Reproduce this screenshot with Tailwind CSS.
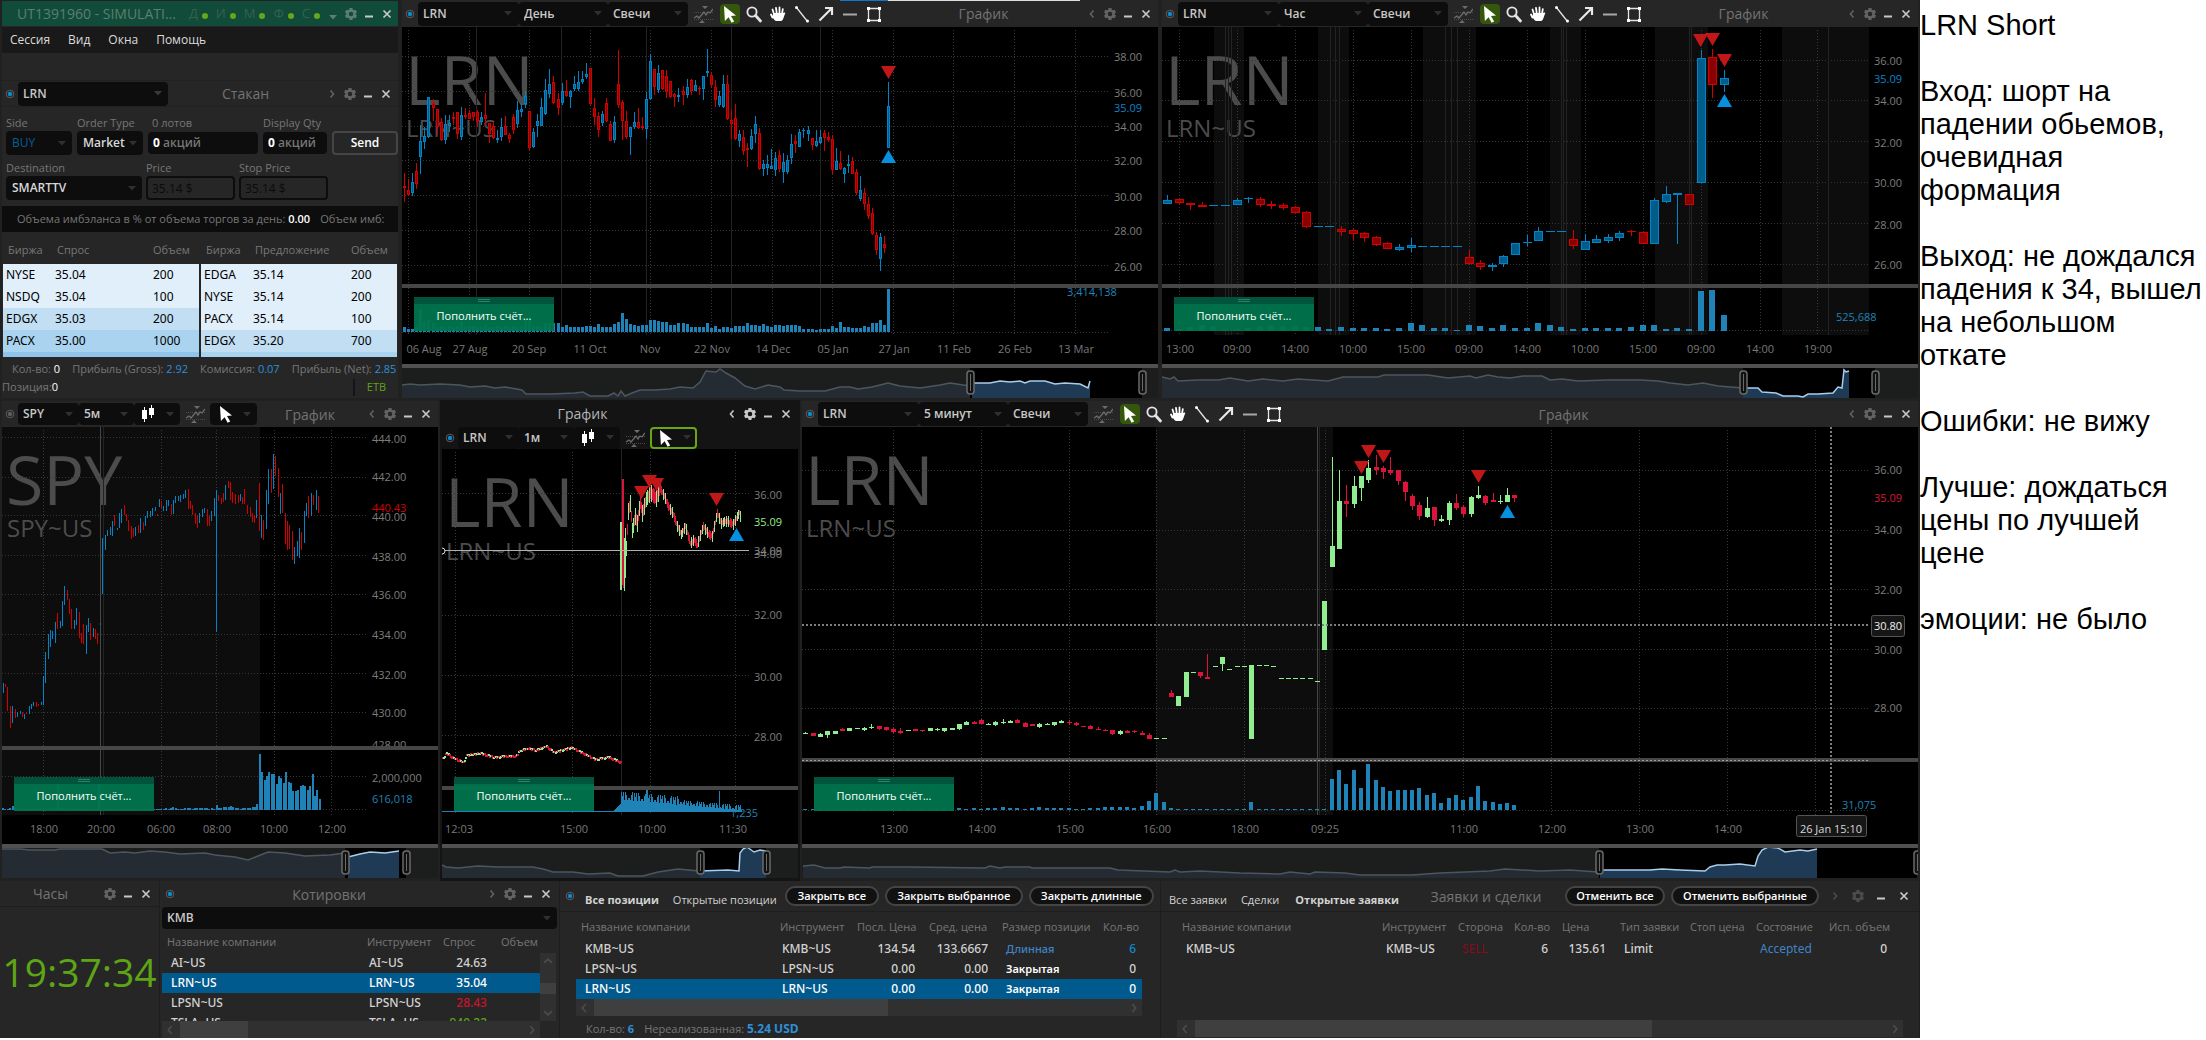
<!DOCTYPE html>
<html lang="ru">
<head>
    <meta charset="UTF-8">
    <meta name="viewport" content="width=device-width, initial-scale=1.0">
    <title>UT1391960 - SIMULATION</title>
    <script src="https://cdn.jsdelivr.net/npm/@tailwindcss/browser@4"></script>
</head>
<body class="bg-white font-['Open_Sans','Noto_Sans',sans-serif] text-[11px] text-[#767676]">
    <!-- Icons -->
    <svg class="hidden">
        <symbol id="i-gear" viewBox="0 0 14 14">
            <path fill-rule="evenodd" fill="currentColor" d="M5.6 1h2.8l.4 1.7 1.1.6 1.7-.5 1.4 2.4L11.7 6.400v1.200l1.300 1.200-1.400 2.400-1.700-.5-1.100.6L8.400 13H5.600l-.4-1.700-1.100-.6-1.700.5L1 8.800l1.300-1.200V6.400L1 5.200l1.400-2.400 1.700.5 1.100-.6zM7 4.700a2.300 2.300 0 1 0 0 4.600 2.300 2.300 0 0 0 0-4.600z"/>
        </symbol>
        <symbol id="i-min" viewBox="0 0 14 14"><path d="M3 9.500h8" stroke="#c8c8c8" stroke-width="2"/></symbol>
        <symbol id="i-close" viewBox="0 0 14 14"><path d="M3.500 3.500l7 7M10.500 3.500l-7 7" stroke="#c8c8c8" stroke-width="1.700"/></symbol>
        <symbol id="i-left" viewBox="0 0 14 14"><path d="M8.500 3.500L5.500 7l3 3.500" fill="none" stroke="currentColor" stroke-width="1.600"/></symbol>
        <symbol id="i-right" viewBox="0 0 14 14"><path d="M5.500 3.500l3 3.500-3 3.500" fill="none" stroke="currentColor" stroke-width="1.600"/></symbol>
        <symbol id="i-ring" viewBox="0 0 10 10">
            <circle cx="5" cy="5" r="3.800" fill="none" stroke="#5c5c5c"/><circle cx="5" cy="5" r="2.200" fill="currentColor"/>
        </symbol>
        <symbol id="i-caret" viewBox="0 0 8 5"><path d="M0 0h8L4 4.500z" fill="currentColor"/></symbol>
        <symbol id="i-indicator" viewBox="0 0 20 20">
            <path d="M1 8.500h19M1 15.500h19" stroke="#4a4a4a" stroke-dasharray="1 1"/>
            <path d="M1 14l3-2 2 2 5-6 2 3 2-3 2 1 3-4" fill="none" stroke="#6c6c6c" stroke-width="1.300"/>
            <path d="M9 2h6l-3 3zM6 19h6l-3-3z" fill="#6c6c6c"/>
        </symbol>
        <symbol id="i-cursor" viewBox="0 0 20 20"><path d="M4 2l12 9.500-5 .6 3.200 5.400-2.600 1.300-3-5.600L4.900 17z" fill="#fff"/></symbol>
        <symbol id="i-zoom" viewBox="0 0 20 20">
            <circle cx="8" cy="8" r="4.600" fill="none" stroke="#e4e4e4" stroke-width="1.900"/><path d="M11.500 11.500l5 5.500" stroke="#e4e4e4" stroke-width="2.800" stroke-linecap="round"/>
        </symbol>
        <symbol id="i-hand" viewBox="0 0 20 20">
            <path d="M6 10L4.500 5.500M8.700 9L8 3.800M11.500 9V3.300M14 10l.8-4.800M4.500 13.500L3 10.500" stroke="#fff" stroke-width="1.800" stroke-linecap="round"/>
            <path d="M5.500 9h9.300l1.800-.5c1 0 .8 1 .3 1.600l-1.500 4.200c-.5 1.500-1.400 2.700-2.400 2.700H8.500c-1.500 0-3-2-4.300-4.500z" fill="#fff"/>
        </symbol>
        <symbol id="i-line" viewBox="0 0 20 20">
            <path d="M4.500 3.500l11 14" stroke="#e4e4e4" stroke-width="1.300"/><circle cx="4.500" cy="3.500" r="1.500" fill="#fff"/><circle cx="15.500" cy="17" r="1.500" fill="#fff"/>
        </symbol>
        <symbol id="i-arrow" viewBox="0 0 20 20"><path d="M3.500 16.500L15 5M9 4h7v7" fill="none" stroke="#e8e8e8" stroke-width="2.200"/></symbol>
        <symbol id="i-hline" viewBox="0 0 20 20"><path d="M3 10.500h14" stroke="#a8a8a8" stroke-width="2"/></symbol>
        <symbol id="i-rect" viewBox="0 0 20 20">
            <path d="M4.500 4.500h11v12h-11z" fill="none" stroke="#e4e4e4" stroke-width="1.300"/><path d="M3 3h3v3H3zM14 3h3v3h-3zM3 15h3v3H3zM14 15h3v3h-3z" fill="#fff"/>
        </symbol>
        <symbol id="i-candles" viewBox="0 0 16 18"><path d="M4.500 2v15M11.500 0v13" stroke="#fff"/><path d="M2 5h5v9H2zM9 3h5v7H9z" fill="#fff"/></symbol>
    </svg>

    <!-- Parts shared by several windows -->
    <template id="window-buttons">
        <button aria-label="Настройки" class="grid place-items-center flex-1"><svg class="size-3.5"><use href="#i-gear"/></svg></button>
        <button aria-label="Свернуть" class="grid place-items-center flex-1"><svg class="size-3.5"><use href="#i-min"/></svg></button>
        <button aria-label="Закрыть" class="grid place-items-center flex-1"><svg class="size-3.5"><use href="#i-close"/></svg></button>
    </template>

    <template id="wide-tools">
        <svg class="size-2.5 ml-[3px] mr-[3px] text-[#0a8ad0]"><use href="#i-ring"/></svg>
        <div class="flex font-semibold text-[12px] text-[#c8c8c8]">
            <label class="relative flex items-center w-[101px]"><select aria-label="Инструмент" class="appearance-none w-full h-6 pl-[5px] rounded-sm bg-[#0d0d0d]"><option data-slot="symbol"></option></select><svg class="absolute right-[7px] w-2 h-[5px] text-[#303030]"><use href="#i-caret"/></svg></label>
            <label class="relative flex items-center w-[89px]"><select aria-label="Период" class="appearance-none w-full h-6 pl-[5px] rounded-sm bg-[#0d0d0d]"><option data-slot="period"></option></select><svg class="absolute right-1.5 w-2 h-[5px] text-[#303030]"><use href="#i-caret"/></svg></label>
            <label class="relative flex items-center w-20"><select aria-label="Вид" class="appearance-none w-full h-6 pl-[5px] rounded-sm bg-[#0d0d0d]"><option>Свечи</option></select><svg class="absolute right-1.5 w-2 h-[5px] text-[#303030]"><use href="#i-caret"/></svg></label>
        </div>
        <button aria-label="Индикаторы" class="ml-[5px] mr-[7px]"><svg class="size-5"><use href="#i-indicator"/></svg></button>
        <div class="flex gap-1">
            <button aria-label="Курсор" class="rounded-sm bg-[#35570b]"><svg class="size-5"><use href="#i-cursor"/></svg></button>
            <button aria-label="Масштаб"><svg class="size-5"><use href="#i-zoom"/></svg></button>
            <button aria-label="Сдвиг"><svg class="size-5"><use href="#i-hand"/></svg></button>
            <button aria-label="Линия"><svg class="size-5"><use href="#i-line"/></svg></button>
            <button aria-label="Стрелка"><svg class="size-5"><use href="#i-arrow"/></svg></button>
            <button aria-label="Уровень"><svg class="size-5"><use href="#i-hline"/></svg></button>
            <button aria-label="Область"><svg class="size-5"><use href="#i-rect"/></svg></button>
        </div>
    </template>

    <template id="narrow-tools">
        <div class="flex font-semibold text-[12px] text-[#c8c8c8]">
            <label class="relative flex items-center w-[61px]"><select aria-label="Инструмент" class="appearance-none w-full h-[22px] pl-[5px] rounded-sm bg-[#0d0d0d]"><option data-slot="symbol"></option></select><svg class="absolute right-1.5 w-2 h-[5px] text-[#303030]"><use href="#i-caret"/></svg></label>
            <label class="relative flex items-center w-[55px]"><select aria-label="Период" class="appearance-none w-full h-[22px] pl-[5px] rounded-sm bg-[#0d0d0d]"><option data-slot="period"></option></select><svg class="absolute right-1.5 w-2 h-[5px] text-[#303030]"><use href="#i-caret"/></svg></label>
        </div>
        <button aria-label="Вид" class="flex items-center justify-between w-[46px] h-[22px] px-1.5 rounded-sm bg-[#0d0d0d]"><svg class="w-4 h-[18px]"><use href="#i-candles"/></svg><svg class="w-2 h-[5px] text-[#303030]"><use href="#i-caret"/></svg></button>
        <button aria-label="Индикаторы" class="mx-[5px]"><svg class="size-5"><use href="#i-indicator"/></svg></button>
    </template>

    <template id="deposit">
        <button class="absolute left-3 bottom-[67px] w-[140px] h-[34px] pb-0.5 border-t-[7px] border-[#00543b] bg-[#00754d]/95 text-white"><i class="absolute -top-[5px] left-1/2 w-3 h-[3px] -ml-1.5 border-y border-[#2f8068]"></i>Пополнить счёт...</button>
    </template>

    <div class="grid grid-cols-[1920fr_286fr] h-screen min-h-[900px]">
        <!-- Terminal -->
        <main class="grid grid-rows-[400fr_481fr_157fr] min-w-0 pb-0.5 overflow-hidden">
            <div class="grid grid-cols-[400fr_760fr_760fr] min-h-0">
                <!-- Main window and order entry -->
                <section class="flex flex-col min-w-0 bg-[#262626] border-2 border-t-1 border-[#212121] overflow-hidden">
                    <header class="flex items-center h-[25px] shrink-0 -mx-px pl-4 bg-[#104c39] text-[#5f7d72]">
                        <h1 class="flex-1 min-w-0 whitespace-nowrap text-[14px]">UT1391960 - SIMULATI...</h1>
                        <ul class="flex gap-2 text-[13px] text-[#37604f]">
                            <li class="flex items-center gap-1">Д<i class="size-1.5 mt-1 rounded-full bg-[#69a615]"></i></li>
                            <li class="flex items-center gap-1">И<i class="size-1.5 mt-1 rounded-full bg-[#69a615]"></i></li>
                            <li class="flex items-center gap-1">М<i class="size-1.5 mt-1 rounded-full bg-[#69a615]"></i></li>
                            <li class="flex items-center gap-1">Ф<i class="size-1.5 mt-1 rounded-full bg-[#69a615]"></i></li>
                            <li class="flex items-center gap-1">С<i class="size-1.5 mt-1 rounded-full bg-[#69a615]"></i></li>
                        </ul>
                        <div data-use="window-buttons" class="flex w-[72px] ml-1 mr-[3px]">
                            <button aria-label="Ещё" class="grid place-items-center flex-1"><svg class="w-2 h-[5px] mt-2"><use href="#i-caret"/></svg></button>
                        </div>
                    </header>
                    <nav class="flex items-center gap-[18px] h-[26px] shrink-0 mt-px px-2 bg-[#191919] text-[12px] text-[#dcdcdc]">
                        <a href="#">Сессия</a><a href="#">Вид</a><a href="#">Окна</a><a href="#">Помощь</a>
                    </nav>
                    <div class="h-[27px] shrink-0"></div>

                    <header class="flex items-center h-[27px] shrink-0 border-y border-[#212121]">
                        <svg class="size-2.5 ml-[3px] mr-[3px] text-[#0a8ad0]"><use href="#i-ring"/></svg>
                        <label class="relative flex items-center w-[150px]">
                            <select aria-label="Инструмент" class="appearance-none w-full h-6 pl-[5px] rounded-sm bg-[#0d0d0d] font-semibold text-[12px] text-[#c8c8c8]"><option>LRN</option></select>
                            <svg class="absolute right-1.5 w-2 h-[5px] text-[#3a3a3a]"><use href="#i-caret"/></svg>
                        </label>
                        <h2 class="flex-1 text-center text-[14px] text-[#737373]">Стакан</h2>
                        <div data-use="window-buttons" class="flex w-[72px] mr-[3px] text-[#636363]">
                            <button aria-label="Далее" class="grid place-items-center flex-1"><svg class="size-3.5"><use href="#i-right"/></svg></button>
                        </div>
                    </header>

                    <form class="shrink-0 pl-1 pt-2 text-[12px] font-semibold">
                        <div class="grid grid-cols-[66px_66px_110px_64px_66px] gap-x-[4px] justify-between">
                            <label class="font-normal text-[11px] leading-4" for="side">Side</label>
                            <label class="font-normal text-[11px] leading-4 whitespace-nowrap" for="type">Order Type</label>
                            <label class="font-normal text-[11px] leading-4 pl-1" for="lots">0 лотов</label>
                            <label class="font-normal text-[11px] leading-4 whitespace-nowrap" for="qty">Display Qty</label>
                            <span></span>
                            <div class="relative flex items-center">
                                <select id="side" class="appearance-none w-full h-6 pl-1.5 rounded-sm bg-[#0d0d0d] font-normal text-[#075d94]"><option>BUY</option></select>
                                <svg class="absolute right-1.5 w-2 h-[5px] text-[#303030]"><use href="#i-caret"/></svg>
                            </div>
                            <div class="relative flex items-center">
                                <select id="type" class="appearance-none w-full h-6 pl-1.5 rounded-sm bg-[#0d0d0d] text-[#d8d8d8]"><option>Market</option></select>
                                <svg class="absolute right-1.5 w-2 h-[5px] text-[#303030]"><use href="#i-caret"/></svg>
                            </div>
                            <div class="flex items-center h-[22px] my-px px-[5px] gap-[3px] rounded-sm bg-[#0d0d0d]"><input id="lots" value="0" class="w-[7px] font-bold text-white">акций</div>
                            <div class="flex items-center h-[22px] my-px px-[5px] gap-[3px] rounded-sm bg-[#0d0d0d]"><input id="qty" value="0" class="w-[7px] font-bold text-white">акций</div>
                            <button type="button" class="h-6 rounded border-2 border-[#454545] text-white">Send</button>
                        </div>
                        <div class="grid grid-cols-[136px_89px_89px] gap-x-1 mt-[5px]">
                            <label class="font-normal text-[11px] leading-4" for="dest">Destination</label>
                            <label class="font-normal text-[11px] leading-4" for="price">Price</label>
                            <label class="font-normal text-[11px] leading-4" for="stop">Stop Price</label>
                            <div class="relative flex items-center">
                                <select id="dest" class="appearance-none w-full h-6 pl-1.5 rounded-sm bg-[#0d0d0d] text-[#d8d8d8]"><option>SMARTTV</option></select>
                                <svg class="absolute right-1.5 w-2 h-[5px] text-[#303030]"><use href="#i-caret"/></svg>
                            </div>
                            <input id="price" value="35.14 $" class="min-w-0 h-6 px-1 rounded border-2 border-[#0d0d0d] font-normal text-[#0b0b0b]">
                            <input id="stop" value="35.14 $" class="min-w-0 h-6 px-1 rounded border-2 border-[#0d0d0d] font-normal text-[#0b0b0b]">
                        </div>
                    </form>

                    <p class="flex items-center gap-2.5 h-[26px] shrink-0 mt-1.5 pl-[15px] bg-[#0d0d0d] whitespace-nowrap overflow-hidden">
                        <span>Объема имбэланса в % от объема торгов за день: <b class="font-semibold text-white">0.00</b></span><span>Объем имб:</span>
                    </p>

                    <!-- Order book -->
                    <div class="grid grid-cols-2 gap-0.5 h-[125px] shrink-0 px-px overflow-hidden">
                        <table class="table-fixed self-start w-full text-left">
                            <thead><tr class="h-8"><th class="w-[49px] pl-[5px] pt-1 font-normal">Биржа</th><th class="pl-[5px] pt-1 font-normal">Спрос</th><th class="w-[46px] pt-1 font-normal">Объем</th></tr></thead>
                            <tbody class="font-['Noto_Sans',sans-serif] text-[12px] text-black">
                                <tr class="h-[22px] bg-[#e1effa]"><td class="pl-[3px]">NYSE</td><td class="pl-[3px]">35.04</td><td>200</td></tr>
                                <tr class="h-[22px] bg-[#e1effa]"><td class="pl-[3px]">NSDQ</td><td class="pl-[3px]">35.04</td><td>100</td></tr>
                                <tr class="h-[22px] bg-[#c1def3]"><td class="pl-[3px]">EDGX</td><td class="pl-[3px]">35.03</td><td>200</td></tr>
                                <tr class="h-[22px] bg-[#aad3f0]"><td class="pl-[3px]">PACX</td><td class="pl-[3px]">35.00</td><td>1000</td></tr>
                                <tr class="h-[22px] bg-[#90c4ea]"><td></td><td></td><td></td></tr>
                            </tbody>
                        </table>
                        <table class="table-fixed self-start w-full text-left">
                            <thead><tr class="h-8"><th class="w-[49px] pl-[5px] pt-1 font-normal">Биржа</th><th class="pl-[5px] pt-1 font-normal">Предложение</th><th class="w-[46px] pt-1 font-normal">Объем</th></tr></thead>
                            <tbody class="font-['Noto_Sans',sans-serif] text-[12px] text-black">
                                <tr class="h-[22px] bg-[#e1effa]"><td class="pl-[3px]">EDGA</td><td class="pl-[3px]">35.14</td><td>200</td></tr>
                                <tr class="h-[22px] bg-[#e1effa]"><td class="pl-[3px]">NYSE</td><td class="pl-[3px]">35.14</td><td>200</td></tr>
                                <tr class="h-[22px] bg-[#e1effa]"><td class="pl-[3px]">PACX</td><td class="pl-[3px]">35.14</td><td>100</td></tr>
                                <tr class="h-[22px] bg-[#c1def3]"><td class="pl-[3px]">EDGX</td><td class="pl-[3px]">35.20</td><td>700</td></tr>
                                <tr class="h-[22px] bg-[#aad3f0]"><td></td><td></td><td></td></tr>
                            </tbody>
                        </table>
                    </div>
                    <p class="flex gap-3 pl-2.5 pt-1 leading-4 whitespace-nowrap">
                        <span>Кол-во: <b class="font-normal text-white">0</b></span>
                        <span>Прибыль (Gross): <b class="font-normal text-[#2f8fd6]">2.92</b></span>
                        <span>Комиссия: <b class="font-normal text-[#2f8fd6]">0.07</b></span>
                        <span>Прибыль (Net): <b class="font-normal text-[#2f8fd6]">2.85</b></span>
                    </p>
                    <p class="flex items-center justify-between flex-1"><span>Позиция:<b class="font-normal text-white">0</b></span><span class="w-[45px] border-l-2 border-[#151515] text-center text-[#5ea516]">ETB</span></p>
                </section>

                <!-- Daily chart -->
                <section class="relative flex flex-col min-w-0 bg-[#262626] border-2 border-t-0 border-[#212121]">
                    <div class="absolute top-0 left-[438px] flex w-60 h-px bg-[#dedede]"><i class="w-12 bg-[#1474d4]"></i></div>
                    <header class="flex items-center h-[27px] shrink-0">
                        <div data-use="wide-tools" data-symbol="LRN" data-period="День" class="contents"></div>
                        <h2 class="flex-1 text-center text-[14px] text-[#737373]">График</h2>
                        <div data-use="window-buttons" class="flex w-[72px] mr-[3px] text-[#636363]">
                            <button aria-label="Назад" class="grid place-items-center flex-1"><svg class="size-3.5"><use href="#i-left"/></svg></button>
                        </div>
                    </header>
                    <div data-use="deposit" class="relative flex-1 min-h-0 bg-black">
                        <svg data-chart="day" class="absolute inset-0 w-full h-full"></svg>
                    </div>
                </section>

                <!-- Hourly chart -->
                <section class="flex flex-col min-w-0 bg-[#262626] border-2 border-t-0 border-[#212121]">
                    <header class="flex items-center h-[27px] shrink-0">
                        <div data-use="wide-tools" data-symbol="LRN" data-period="Час" class="contents"></div>
                        <h2 class="flex-1 text-center text-[14px] text-[#737373]">График</h2>
                        <div data-use="window-buttons" class="flex w-[72px] mr-[3px] text-[#636363]">
                            <button aria-label="Назад" class="grid place-items-center flex-1"><svg class="size-3.5"><use href="#i-left"/></svg></button>
                        </div>
                    </header>
                    <div data-use="deposit" class="relative flex-1 min-h-0 bg-black">
                        <svg data-chart="hour" class="absolute inset-0 w-full h-full"></svg>
                    </div>
                </section>
            </div>

            <div class="grid grid-cols-[440fr_360fr_1120fr] min-h-0">
                <!-- SPY 5m chart -->
                <section class="flex flex-col min-w-0 bg-[#262626] border-2 border-t-1 border-b-3 border-[#212121]">
                    <header class="flex items-center h-[26px] shrink-0">
                        <svg class="size-2.5 ml-[3px] mr-[3px] text-[#5c5c5c]"><use href="#i-ring"/></svg>
                        <div data-use="narrow-tools" data-symbol="SPY" data-period="5м" class="contents"></div>
                        <button aria-label="Курсор" class="flex items-center justify-between w-[47px] h-[22px] px-1.5 rounded-sm bg-[#0d0d0d]"><svg class="size-5"><use href="#i-cursor"/></svg><svg class="w-2 h-[5px] text-[#303030]"><use href="#i-caret"/></svg></button>
                        <h2 class="flex-1 text-center text-[14px] text-[#737373]">График</h2>
                        <div data-use="window-buttons" class="flex w-[72px] mr-[3px] text-[#636363]">
                            <button aria-label="Назад" class="grid place-items-center flex-1"><svg class="size-3.5"><use href="#i-left"/></svg></button>
                        </div>
                    </header>
                    <div data-use="deposit" class="relative flex-1 min-h-0 bg-black">
                        <svg data-chart="spy" class="absolute inset-0 w-full h-full"></svg>
                    </div>
                </section>

                <!-- LRN 1m chart, focused window -->
                <section class="flex flex-col min-w-0 bg-[#141414] border-2 border-t-1 border-b-3 border-[#141414]">
                    <header class="flex items-center h-[25px] shrink-0">
                        <h2 class="flex-1 text-center text-[14px] text-[#b4b4b4]">График</h2>
                        <div data-use="window-buttons" class="flex w-[72px] mr-[3px] text-[#c8c8c8]">
                            <button aria-label="Назад" class="grid place-items-center flex-1"><svg class="size-3.5"><use href="#i-left"/></svg></button>
                        </div>
                    </header>
                    <div class="flex items-center h-[23px] shrink-0">
                        <svg class="size-2.5 ml-[3px] mr-[3px] text-[#0a8ad0]"><use href="#i-ring"/></svg>
                        <div data-use="narrow-tools" data-symbol="LRN" data-period="1м" class="contents"></div>
                        <button aria-label="Курсор" class="flex items-center justify-between w-[47px] h-[22px] px-1 rounded border-2 border-[#69a615] bg-[#111]"><svg class="size-5"><use href="#i-cursor"/></svg><svg class="w-2 h-[5px] text-[#303030]"><use href="#i-caret"/></svg></button>
                    </div>
                    <div data-use="deposit" class="relative flex-1 min-h-0 bg-black">
                        <svg data-chart="minute" class="absolute inset-0 w-full h-full"></svg>
                    </div>
                </section>

                <!-- LRN 5m chart -->
                <section class="flex flex-col min-w-0 bg-[#262626] border-2 border-t-1 border-b-3 border-[#212121]">
                    <header class="flex items-center h-[26px] shrink-0">
                        <div data-use="wide-tools" data-symbol="LRN" data-period="5 минут" class="contents"></div>
                        <h2 class="flex-1 text-center text-[14px] text-[#737373]">График</h2>
                        <div data-use="window-buttons" class="flex w-[72px] mr-[3px] text-[#636363]">
                            <button aria-label="Назад" class="grid place-items-center flex-1"><svg class="size-3.5"><use href="#i-left"/></svg></button>
                        </div>
                    </header>
                    <div data-use="deposit" class="relative flex-1 min-h-0 bg-black">
                        <svg data-chart="five" class="absolute inset-0 w-full h-full"></svg>
                    </div>
                </section>
            </div>

            <div class="grid grid-cols-[160fr_400fr_601fr_759fr] min-h-0">
                <!-- Clock -->
                <section class="flex flex-col min-w-0 bg-[#262626] border-r border-[#1e1e1e]">
                    <header class="flex items-center h-[26px] shrink-0 border-b border-[#1e1e1e]">
                        <h2 class="flex-1 text-center text-[14px] text-[#737373]">Часы</h2>
                        <div data-use="window-buttons" class="flex w-[54px] mr-1 text-[#636363]"></div>
                    </header>
                    <time class="flex-1 grid place-items-center text-[39px] text-[#5ea516]">19:37:34</time>
                </section>

                <!-- Quotes -->
                <section class="flex flex-col min-w-0 px-0.5 bg-[#262626] border-r border-[#1e1e1e] overflow-hidden">
                    <header class="flex items-center h-[26px] shrink-0">
                        <svg class="size-2.5 ml-[3px] text-[#0a8ad0]"><use href="#i-ring"/></svg>
                        <h2 class="flex-1 text-center text-[14px] text-[#737373]">Котировки</h2>
                        <div data-use="window-buttons" class="flex w-[72px] mr-0.5 text-[#636363]">
                            <button aria-label="Далее" class="grid place-items-center flex-1"><svg class="size-3.5"><use href="#i-right"/></svg></button>
                        </div>
                    </header>
                    <label class="relative flex items-center shrink-0"><select aria-label="Список" class="appearance-none w-full h-[22px] pl-[5px] rounded-sm bg-[#0d0d0d] font-semibold text-[12px] text-[#c8c8c8]"><option>KMB</option></select><svg class="absolute right-1.5 w-2 h-[5px] text-[#303030]"><use href="#i-caret"/></svg></label>
                    <div class="flex flex-1 min-h-0">
                        <div class="flex-1 min-w-0 overflow-hidden">
                            <table class="table-fixed w-full text-left">
                                <thead><tr class="h-6"><th class="w-[205px] pl-[5px] pt-0.5 font-normal">Название компании</th><th class="w-[76px] pt-0.5 font-normal">Инструмент</th><th class="w-[50px] pt-0.5 font-normal">Спрос</th><th class="pl-2 pt-0.5 font-normal">Объем</th></tr></thead>
                                <tbody class="font-['Noto_Sans',sans-serif] font-medium text-[12px] leading-5 text-[#d2d2d2]">
                                    <tr class="h-5"><td class="pl-[9px]">AI~US</td><td class="pl-0.5">AI~US</td><td class="text-right pr-1.5">24.63</td><td></td></tr>
                                    <tr class="h-5 bg-[#005a8e] text-white"><td class="pl-[9px]">LRN~US</td><td class="pl-0.5">LRN~US</td><td class="text-right pr-1.5">35.04</td><td></td></tr>
                                    <tr class="h-5"><td class="pl-[9px]">LPSN~US</td><td class="pl-0.5">LPSN~US</td><td class="text-right pr-1.5 text-[#c4152f]">28.43</td><td></td></tr>
                                    <tr class="h-5"><td class="pl-[9px]">TSLA~US</td><td class="pl-0.5">TSLA~US</td><td class="text-right pr-1.5 text-[#5ea516]">940.22</td><td></td></tr>
                                </tbody>
                            </table>
                        </div>
                        <div class="flex flex-col w-4 mt-6 mr-px bg-[#303030] text-[#4a4a4a]">
                            <svg class="size-4 rotate-90"><use href="#i-left"/></svg>
                            <div class="h-[11px] mt-3.5 bg-[#3f3f3f]"></div>
                            <svg class="size-4 mt-auto rotate-90"><use href="#i-right"/></svg>
                        </div>
                    </div>
                    <div class="flex items-center h-[17px] shrink-0 mr-[17px] bg-[#303030] text-[#4a4a4a]">
                        <svg class="size-4 mr-0.5"><use href="#i-left"/></svg><div class="w-[68px] h-full bg-[#3f3f3f]"></div><svg class="size-4 ml-auto"><use href="#i-right"/></svg>
                    </div>
                </section>

                <!-- Positions -->
                <section class="flex flex-col min-w-0 bg-[#262626] border-r border-[#1e1e1e] overflow-hidden">
                    <header class="flex items-center h-[31px] shrink-0 border-b border-[#1e1e1e] whitespace-nowrap text-[#d2d2d2] overflow-hidden">
                        <svg class="size-2.5 ml-[5px] shrink-0 text-[#0a8ad0]"><use href="#i-ring"/></svg>
                        <a href="#" class="ml-[10px] pt-2 font-bold">Все позиции</a>
                        <a href="#" class="ml-3.5 mr-2 pt-2">Открытые позиции</a>
                        <div class="flex gap-1.5 font-semibold text-white">
                            <button class="w-[94px] h-5 rounded-full border-2 border-[#454545] bg-[#111] leading-4">Закрыть все</button>
                            <button class="w-[138px] h-5 rounded-full border-2 border-[#454545] bg-[#111] leading-4">Закрыть выбранное</button>
                            <button class="w-[125px] h-5 rounded-full border-2 border-[#454545] bg-[#111] leading-4">Закрыть длинные</button>
                        </div>
                    </header>
                    <div class="pl-4 pr-[18px]">
                        <table class="table-fixed w-full text-left whitespace-nowrap">
                            <thead><tr class="h-[27px]"><th class="w-[204px] pl-[5px] pt-1 font-normal">Название компании</th><th class="w-[77px] pt-1 font-normal">Инструмент</th><th class="w-[72px] pt-1 font-normal">Посл. Цена</th><th class="w-[73px] pt-1 font-normal">Сред. цена</th><th class="w-[101px] pt-1 font-normal">Размер позиции</th><th class="pt-1 font-normal">Кол-во</th></tr></thead>
                            <tbody class="font-['Noto_Sans',sans-serif] font-medium text-[12px] leading-5 text-[#d2d2d2]">
                                <tr class="h-5"><td class="pl-[9px]">KMB~US</td><td class="pl-0.5">KMB~US</td><td class="text-right pr-3.5">134.54</td><td class="text-right pr-3.5">133.6667</td><td class="pl-1 text-[11px] text-[#3f84c8]">Длинная</td><td class="text-right pr-1.5 text-[#0a8ad0]">6</td></tr>
                                <tr class="h-5"><td class="pl-[9px]">LPSN~US</td><td class="pl-0.5">LPSN~US</td><td class="text-right pr-3.5">0.00</td><td class="text-right pr-3.5">0.00</td><td class="pl-1 text-[11px] font-semibold text-white">Закрытая</td><td class="text-right pr-1.5">0</td></tr>
                                <tr class="h-5 bg-[#005a8e] text-white"><td class="pl-[9px]">LRN~US</td><td class="pl-0.5">LRN~US</td><td class="text-right pr-3.5">0.00</td><td class="text-right pr-3.5">0.00</td><td class="pl-1 text-[11px] font-semibold">Закрытая</td><td class="text-right pr-1.5">0</td></tr>
                            </tbody>
                        </table>
                        <div class="flex items-center h-[17px] bg-[#303030] text-[#4a4a4a]">
                            <svg class="size-4 mr-0.5"><use href="#i-left"/></svg><div class="w-[52%] h-full bg-[#3f3f3f]"></div><svg class="size-4 ml-auto"><use href="#i-right"/></svg>
                        </div>
                    </div>
                    <p class="flex-1 flex items-center gap-2.5 pt-1 pl-[26px]"><span>Кол-во: <b class="text-[#2f8fd6]">6</b></span><span>Нереализованная: <b class="text-[12px] text-[#2f8fd6]">5.24 USD</b></span></p>
                </section>

                <!-- Orders -->
                <section class="flex flex-col min-w-0 bg-[#262626] border-r border-[#1e1e1e] overflow-hidden">
                    <header class="flex items-center h-[31px] shrink-0 border-b border-[#1e1e1e] whitespace-nowrap text-[#d2d2d2]">
                        <a href="#" class="ml-2 pt-2">Все заявки</a>
                        <a href="#" class="ml-3.5 pt-2">Сделки</a>
                        <a href="#" class="ml-4 pt-2 font-bold">Открытые заявки</a>
                        <h2 class="flex-1 pl-2 text-center text-[14px] text-[#737373]">Заявки и сделки</h2>
                        <div class="flex gap-1.5 mr-1 font-semibold text-white">
                            <button class="w-[100px] h-5 rounded-full border-2 border-[#454545] bg-[#111] leading-4">Отменить все</button>
                            <button class="w-[148px] h-5 rounded-full border-2 border-[#454545] bg-[#111] leading-4">Отменить выбранные</button>
                        </div>
                        <div data-use="window-buttons" class="flex w-[92px] mr-1 text-[#4c4c4c]">
                            <button aria-label="Далее" class="grid place-items-center flex-1"><svg class="size-3.5"><use href="#i-right"/></svg></button>
                        </div>
                    </header>
                    <div class="flex flex-col flex-1 pl-4 pr-4 pb-px">
                        <table class="table-fixed w-full text-left whitespace-nowrap">
                            <thead><tr class="h-[27px]"><th class="w-[205px] pl-[5px] pt-1 font-normal">Название компании</th><th class="w-[76px] pt-1 font-normal">Инструмент</th><th class="w-14 pt-1 font-normal">Сторона</th><th class="w-12 pt-1 font-normal">Кол-во</th><th class="w-[58px] pt-1 font-normal">Цена</th><th class="w-[70px] pt-1 font-normal">Тип заявки</th><th class="w-[66px] pt-1 font-normal">Стоп цена</th><th class="w-[73px] pt-1 font-normal">Состояние</th><th class="pt-1 font-normal">Исп. объем</th></tr></thead>
                            <tbody class="font-['Noto_Sans',sans-serif] font-medium text-[12px] leading-5 text-[#d2d2d2]">
                                <tr class="h-5"><td class="pl-[9px]">KMB~US</td><td class="pl-1">KMB~US</td><td class="pl-1 font-normal text-[#8a0a20]">SELL</td><td class="text-right pr-3.5">6</td><td class="text-right pr-3.5">135.61</td><td class="pl-1">Limit</td><td></td><td class="pl-1 font-normal text-[#3f84c8]">Accepted</td><td class="text-right pr-4">0</td></tr>
                            </tbody>
                        </table>
                        <div class="flex items-center h-[17px] mt-auto bg-[#303030] text-[#4a4a4a]">
                            <svg class="size-4 mr-0.5"><use href="#i-left"/></svg><div class="w-[63%] h-full bg-[#3f3f3f]"></div><svg class="size-4 ml-auto"><use href="#i-right"/></svg>
                        </div>
                    </div>
                </section>
            </div>
        </main>

        <!-- Trade notes -->
        <aside class="min-w-0 pt-[9px] font-['Liberation_Sans',Arial,sans-serif] text-[29px] leading-[33px] text-black space-y-[33px]">
            <p>LRN Short</p>
            <p>Вход: шорт на падении обьемов, очевидная формация</p>
            <p>Выход: не дождался падения к 34, вышел на небольшом откате</p>
            <p>Ошибки: не вижу</p>
            <p>Лучше: дождаться цены по лучшей цене</p>
            <p>эмоции: не было</p>
        </aside>
    </div>

    <script>
        // Fill the shared parts
        document.querySelectorAll('[data-use]').forEach(el => {
            const part = document.getElementById(el.dataset.use).content.cloneNode(true);
            part.querySelectorAll('[data-slot]').forEach(slot => slot.textContent = el.dataset[slot.dataset.slot]);
            el.append(part);
        });

        const BLUE = '#0084c6', RED = '#d40000', GREEN = '#90ee90', CRIMSON = '#dc143c', VOL = '#1f83b8';

        // candles: colour + high,top,bottom,low; "d" + y is a flat bar
        const charts = {
            day: {
                w: 756, h: 371, at: [-2, -27], sep: 284, bar: 364, base: 332, right: 708,
                mark: ['LRN', 'LRN~US', 5, 105, 137],
                gx: [8, 69, 129, 190, 250, 311, 372, 432, 493, 553, 614, 675], gy: [56, 91, 126, 160, 195, 230, 265, 332],
                lines: [76, 161, 246, 331, 420], bands: [],
                x0: 4.3, step: 4.032, body: 3, up: [BLUE, '#005c8a'], down: [RED, '#8b0000'],
                candles: 'r173,186,188,202 r179,190,195,196 b173,182,193,196 r163,171,184,189 b125,141,157,174 b127,136,142,149 b97,97,137,138 r99,103,108,121 r109,109,127,135 r118,122,140,141 b115,124,140,144 b115,123,126,132 r112,117,119,125 r112,112,134,139 b107,115,137,140 r108,115,117,119 r110,113,119,119 r112,112,117,121 r110,112,122,127 b112,117,122,125 r93,115,119,126 r123,123,134,143 r122,126,138,139 b130,138,140,143 b118,127,137,141 r116,126,135,135 r133,135,139,143 r114,117,130,134 b101,110,124,128 b103,109,112,117 b91,96,104,108 r111,111,148,150 b128,132,147,148 b114,121,126,137 b98,107,126,126 b79,90,114,115 b69,84,94,98 r76,82,103,104 r93,99,108,115 b83,91,103,105 r80,91,96,97 b90,91,97,108 b76,84,89,91 b71,82,89,91 b71,79,82,84 b63,74,77,79 r68,68,104,105 r98,108,117,125 r112,116,130,137 b111,114,123,126 r98,103,121,122 r121,124,141,141 b116,122,140,143 r50,84,105,108 r100,102,121,140 r111,121,137,139 b127,127,137,155 b112,122,127,129 r108,122,128,129 r117,126,128,130 b92,99,129,139 b54,61,99,100 r69,69,87,95 b65,73,90,93 r70,70,89,90 r70,76,92,98 r81,81,97,98 r93,94,97,107 b88,95,97,102 r86,91,95,105 b79,87,95,98 r79,80,91,95 b80,85,91,91 r86,88,89,95 b76,76,89,100 b49,71,73,77 r72,75,85,87 r80,87,100,107 b91,96,105,107 b75,84,107,108 r75,84,119,120 r110,120,124,139 r104,118,139,140 b130,134,141,147 r130,137,151,155 r143,148,150,167 b129,136,149,150 b116,124,134,143 r128,133,169,170 b160,164,169,176 b155,164,168,175 b149,166,169,169 b152,158,170,176 r150,155,169,172 b153,162,172,183 b155,160,172,174 b134,144,158,164 r135,141,144,153 b129,132,147,147 b128,130,131,138 b126,130,134,141 r138,138,145,150 b130,141,146,147 b130,137,143,144 r130,133,138,151 r132,137,140,142 r135,139,170,174 b148,161,170,170 r151,163,169,170 b167,168,174,183 b155,164,166,173 r157,161,174,174 r169,172,193,195 b176,190,199,201 r188,193,204,210 r197,204,216,219 r208,213,234,235 r232,235,250,255 b233,237,259,271 r236,244,248,253 b82,106,148,148',
                volW: 3,
                vol: '5 3 3 5 23 11 12 9 5 6 5 6 5 6 10 6 6 6 5 5 7 5 5 6 5 6 5 6 5 6 14 15 6 6 5 9 9 9 9 5 7 5 5 5 5 6 6 5 8 5 5 5 8 10 19 13 8 7 6 7 7 12 12 11 10 10 7 7 9 9 8 5 5 5 5 9 4 6 3 5 5 4 6 6 6 9 7 7 6 8 6 5 7 7 6 7 7 7 6 3 3 3 2 3 3 3 6 4 10 5 5 4 4 4 6 5 9 9 12 7 43',
                prices: [[714, 57, '38.00'], [714, 93, '36.00'], [714, 108, '35.09', '#0a84cc'], [714, 127, '34.00'], [714, 161, '32.00'], [714, 197, '30.00'], [714, 231, '28.00'], [714, 267, '26.00'], [667, 292, '3,414,138', '#1f83b8']],
                times: [[24, '06 Aug'], [70, '27 Aug'], [129, '20 Sep'], [190, '11 Oct'], [250, 'Nov'], [312, '22 Nov'], [373, '14 Dec'], [433, '05 Jan'], [494, '27 Jan'], [554, '11 Feb'], [615, '26 Feb'], [676, '13 Mar']],
                timeY: 349,
                sell: [[488, 66]], buy: [[488, 150]],
                past: '2,385 10,384 20,385 40,384 60,385 70,387 85,386 95,388 105,387 122,390 126,394 150,394 175,393 183,392 190,396 208,396 214,393 218,396 221,391 225,396 232,393 240,390 255,390 270,389 280,387 293,388 300,382 306,371 316,372 320,369 326,373 335,378 345,386 355,389 368,385 380,387 384,390 400,391 425,391 440,387 450,387 458,389 472,387 488,383 500,386 520,388 540,385 550,383 570,386',
                view: '572,383 590,383 600,381 610,382 620,381 625,383 630,381 645,381 655,384 665,383 680,384 688,388 690,381',
                range: [570, 742]
            },
            hour: {
                w: 756, h: 371, at: [-4, -27], sep: 284, bar: 364, base: 331, right: 711,
                mark: ['LRN', 'LRN~US', 7, 105, 137],
                gx: [21, 79, 137, 195, 253, 311, 369, 427, 485, 543, 602, 659], gy: [60, 100, 141, 182, 223, 264, 330],
                lines: [67, 70, 73, 172, 177, 181, 287, 293, 299, 403, 405, 408, 531, 533, 670],
                bands: [[56, 86], [160, 191], [265, 318], [392, 423], [497, 550], [624, 711]],
                x0: 9, step: 11.6, body: 9, up: [BLUE, '#005c8a'], down: [RED, '#8b0000'],
                candles: 'b195,200,204,204 r199,199,203,204 r203,203,205,210 r202,205,207,207 d205 d205 b198,200,205,205 b197,198,199,203 r197,199,205,207 r201,204,206,209 r203,205,208,210 r206,207,213,214 r211,212,227,228 d226 d226 r226,229,232,236 r229,230,234,241 r232,233,238,242 r236,237,245,246 r242,243,249,249 b244,247,250,251 b238,245,248,252 d246 d246 d246 d246 r250,257,264,264 r260,263,267,270 b263,265,267,271 b255,256,264,267 b243,243,255,255 b235,242,243,246 b227,231,241,241 d231 d231 r230,239,246,249 b234,241,250,250 b235,239,243,243 b234,237,241,243 b231,233,238,241 r230,231,232,236 r231,232,244,244 b198,200,244,244 b186,194,202,203 b193,193,195,244 r194,194,205,205 b50,58,183,183 r49,57,85,98 b70,78,85,92',
                volW: 6,
                vol: '3 2 4 6 5 2 2 3 5 6 5 5 4 4 2 4 3 3 3 2 3 8 6 3 3 1 6 5 3 6 3 3 8 6 4 2 3 3 3 3 4 6 6 2 3 2 40 41 16',
                prices: [[716, 61, '36.00'], [716, 79, '35.09', '#0a84cc'], [716, 101, '34.00'], [716, 143, '32.00'], [716, 183, '30.00'], [716, 225, '28.00'], [716, 265, '26.00'], [678, 317, '525,688', '#1f83b8']],
                times: [[22, '13:00'], [79, '09:00'], [137, '14:00'], [195, '10:00'], [253, '15:00'], [311, '09:00'], [369, '14:00'], [427, '10:00'], [485, '15:00'], [543, '09:00'], [602, '14:00'], [660, '19:00']],
                timeY: 349,
                sell: [[542, 34], [554, 33], [566, 54]], buy: [[566, 94]],
                past: '4,377 12,379 16,377 20,381 40,380 60,380 72,378 90,381 105,379 125,381 140,379 170,381 185,377 220,377 226,375 270,375 290,378 312,376 318,378 330,375 340,377 352,378 365,376 384,376 392,380 404,379 420,381 450,380 482,380 500,381 512,383 530,385 545,383 560,386 585,388',
                view: '585,388 600,388 604,392 618,393 625,396 640,396 645,397 650,394 660,394 675,393 680,387 684,388 686,370 688,372 691,371',
                range: [585, 717]
            },
            spy: {
                w: 436, h: 451, at: [-2, -29], sep: 348, bar: 446, base: 412, right: 367,
                mark: ['SPY', 'SPY~US', 6, 107, 139],
                gx: [43, 161, 216, 274, 331], gy: [39, 79, 117, 157, 196, 236, 275, 314, 378, 411],
                lines: [103], bright: [100], bands: [[2, 260]],
                ticks: '3b285,295 5r286,289 7r289,313 10r308,330 12b308,325 15r311,320 17b314,319 20b313,316 22r314,319 24b316,321 26r314,316 29b308,316 31b306,311 33b304,308 36r304,309 38r306,308 41b304,307 43b278,307 45b254,285 48b236,261 50b232,249 52b233,241 55b224,245 57r215,231 60b223,230 62b203,228 64b188,207 67r192,202 69r201,216 71r211,231 74b222,231 76b210,227 79r214,240 81r235,245 83r226,246 86b227,256 88b220,234 90r225,242 93b230,239 95r231,241 97r235,246 100b225,227 102b140,196 105b137,152 107b132,138 110b129,137 112b123,138 114r117,128 117b130,132 119b115,130 121b111,125 124r107,117 126r116,123 128r122,133 131r128,141 133r130,139 135b129,138 138r127,135 140b120,135 143r124,132 145b118,128 147b113,120 150b113,119 152b110,118 155b109,113 157r116,118 159b101,109 161r103,110 163b108,113 166b102,113 168b102,108 171r106,117 173b102,116 175b98,105 178b98,103 180b97,104 183b96,101 185b92,100 188r91,111 190r103,111 192r107,117 195r115,126 197r117,130 199b115,125 202b111,119 204b110,115 207r111,128 209r117,128 211b113,123 214b100,118 216b92,234 218r97,103 221r100,106 223r95,104 225b87,102 228r83,90 230r84,102 232r94,105 235r96,106 238r97,105 240b96,103 242r99,106 244r91,106 247r107,116 250r109,119 252r115,124 254r118,125 256b102,120 259r85,133 261b117,140 263r122,142 266b92,131 268b71,106 271r71,95 273b56,91 275r58,78 278r70,99 280b95,116 282r86,115 285r115,146 287r123,152 289r127,151 292r133,162 294b149,166 297b143,158 299b130,160 301r134,152 304b113,145 306b105,118 308r98,120 311b95,118 313r97,107 316b92,112 318r98,115',
                x0: 3, step: 2.4, volW: 2,
                vol: '2 1 1 2 4 2 1 1 2 1 1 1 1 1 1 2 2 1 1 1 2 1 1 28 3 2 2 1 1 1 1 1 2 1 1 1 1 1 1 1 26 1 1 1 1 1 1 1 1 1 1 1 1 1 1 1 1 1 1 1 1 1 1 1 1 1 1 1 2 1 2 3 2 1 1 1 2 2 2 1 2 2 2 2 2 2 1 2 1 5 2 2 3 3 3 4 3 2 2 1 2 2 2 2 3 3 6 56 38 30 34 38 36 36 26 34 32 27 38 28 27 19 19 20 24 25 24 20 24 36 14 20 11',
                prices: [[372, 41, '444.00'], [372, 79, '442.00'], [372, 110, '440.43', '#d00000'], [372, 119, '440.00'], [372, 159, '438.00'], [372, 197, '436.00'], [372, 237, '434.00'], [372, 277, '432.00'], [372, 315, '430.00'], [372, 347, '428.00'], [372, 380, '2,000,000'], [372, 401, '616,018', '#1f83b8']],
                times: [[44, '18:00'], [101, '20:00'], [161, '06:00'], [217, '08:00'], [274, '10:00'], [332, '12:00']],
                timeY: 431,
                sell: [], buy: [],
                past: '2,451 20,451 30,452 55,452 60,451 102,451 110,455 125,454 135,455 150,453 165,454 180,456 205,455 215,457 235,459 248,462 258,458 268,454 285,455 305,458 330,457 345,455',
                view: '348,459 360,456 370,454 385,455 399,453',
                range: [345, 406]
            },
            minute: {
                w: 356, h: 429, at: [-4, -51], sep: 388, bar: 446, base: 414, right: 311,
                mark: ['LRN', 'LRN~US', 7, 129, 162],
                gx: [17, 134, 212, 297], gy: [95, 156, 217, 277, 337, 413],
                lines: [183], bands: [],
                walk: [
                    [[4, 361], [8, 356], [15, 361], [25, 365], [28, 358], [42, 356], [55, 360], [67, 359], [77, 359], [82, 353], [90, 351], [97, 353], [108, 349], [115, 355], [123, 353], [133, 350], [143, 355], [157, 362], [170, 360], [178, 363], [183, 366]],
                    [[186, 185], [188, 150], [190, 113], [192, 105], [194, 132], [197, 118], [199, 125], [202, 103], [204, 115], [208, 101], [212, 95], [215, 97], [218, 100], [222, 90], [226, 98], [230, 108], [235, 116], [239, 128], [243, 136], [247, 128], [252, 145], [256, 142], [259, 147], [265, 128], [270, 136], [274, 138], [279, 115], [283, 125], [288, 123], [295, 126], [301, 114], [303, 123]]
                ],
                ticks: '182g124,192 183g124,192 184r81,187 185r81,190 186g140,193 187g130,180',
                down: [CRIMSON, CRIMSON],
                x0: 4, step: 1, volW: 1, vol: '',
                prices: [[316, 97, '36.00'], [316, 124, '35.09', '#90ee90'], [316, 153, '34.09', '#8a8a8a'], [316, 156, '34.00'], [316, 217, '32.00'], [316, 279, '30.00'], [316, 339, '28.00'], [292, 415, '1,235', '#1f83b8']],
                times: [[21, '12:03'], [136, '15:00'], [214, '10:00'], [295, '11:30']],
                timeY: 431, level: 152,
                sell: [[203, 88], [211, 77], [218, 80], [278, 95]], buy: [[298, 130]],
                past: '4,467 8,469 20,470 40,468 60,469 95,469 105,471 115,474 135,474 150,476 172,475 180,478 205,478 220,474 240,471 250,472 262,473',
                view: '262,473 290,472 301,473 302,455 305,451 309,449 316,454 322,452 328,453',
                range: [262, 328]
            },
            five: {
                w: 1116, h: 451, at: [-2, -29], sep: 360, bar: 446, base: 412, right: 1069,
                mark: ['LRN', 'LRN~US', 5, 107, 139],
                gx: [93, 181, 269, 356, 444, 525, 663, 751, 839, 927, 1015], gy: [72, 132, 191, 251, 310, 412],
                lines: [519], bright: [517], bands: [[356, 533]],
                x0: 5.4, step: 7.31, body: 5, up: [GREEN, GREEN], down: [CRIMSON, CRIMSON],
                candles: 'g334,335,336,336 r335,335,338,338 g335,336,339,339 g333,333,337,340 g333,333,336,336 r330,331,333,333 g330,330,333,333 g330,330,331,331 g329,330,332,333 g326,329,330,331 r328,328,331,332 r329,329,332,333 r330,331,334,335 r330,333,335,336 d332 r331,331,333,333 r332,332,333,334 g330,330,333,333 g330,331,332,333 g330,330,333,334 g330,330,332,332 g326,326,331,332 g323,324,327,327 r323,324,326,326 r321,322,326,326 g325,326,327,327 g323,324,327,328 g321,324,325,326 g322,323,325,325 r321,322,325,325 r324,325,329,329 r326,326,328,328 g325,326,329,330 g325,326,327,327 g324,324,327,328 g322,323,325,325 r322,324,325,327 r324,325,327,328 r328,328,329,329 r327,328,331,331 r329,331,332,332 r331,332,333,333 r332,332,336,337 g332,333,336,337 r332,333,335,335 r332,333,334,335 r333,335,337,337 r335,337,341,341 d340 d340 r292,295,299,299 g298,298,308,308 g274,274,299,299 d274 r274,274,278,280 r256,279,281,281 d268 g259,259,266,273 d271 d268 d268 g267,267,341,341 d267 d267 d268 d280 d280 d280 d280 d280 d283 g203,203,252,252 g59,148,169,169 g72,103,151,151 r87,103,106,119 g78,88,106,110 g78,78,90,103 g62,70,82,85 r57,69,72,77 r68,70,74,81 r59,72,75,77 r72,72,83,87 r83,84,94,103 r96,98,108,112 r104,107,118,122 g99,110,119,120 r109,109,122,128 g117,121,123,124 g103,105,122,127 r96,105,110,112 r107,109,116,119 g98,99,116,119 g88,97,100,101 r97,98,105,107 r95,102,104,104 g97,103,104,106 g90,97,104,104 r97,97,100,104',
                volW: 4,
                vol: '1 1 1 1 1 1 1 1 1 1 1 1 1 1 1 1 1 1 1 1 1 2 1 2 1 2 2 3 2 2 1 2 3 2 2 2 2 1 1 2 2 3 3 3 3 2 4 9 17 8 2 1 1 1 1 1 1 1 1 1 1 8 1 1 1 1 1 1 1 1 1 1 31 40 26 40 22 46 30 23 19 20 20 20 22 15 17 7 12 15 10 13 24 9 8 6 7 5',
                prices: [[1074, 72, '36.00'], [1074, 100, '35.09', '#dc143c'], [1074, 132, '34.00'], [1074, 192, '32.00'], [1074, 252, '30.00'], [1074, 310, '28.00'], [1042, 407, '31,075', '#1f83b8']],
                times: [[94, '13:00'], [182, '14:00'], [270, '15:00'], [357, '16:00'], [445, '18:00'], [525, '09:25'], [664, '11:00'], [752, '12:00'], [840, '13:00'], [928, '14:00']],
                timeY: 431, cross: [1031, 227],
                sell: [[561, 63], [568, 47], [583, 52], [678, 72]], buy: [[707, 107]],
                past: '3,468 14,467 25,470 40,470 44,469 70,470 72,469 110,469 185,470 190,468 200,470 205,469 230,469 232,470 310,470 318,472 370,474 375,472 380,474 400,473 440,475 480,476 490,474 510,476 515,474 545,475 560,477 612,477 640,475 690,473 705,471 740,473 770,472 798,474',
                view: '800,473 804,472 850,472 862,471 880,472 905,473 910,469 917,467 925,467 940,466 955,468 958,458 962,452 968,449 978,450 985,454 1000,452 1008,453 1017,451',
                range: [799, 1117]
            }
        };

        function draw(svg, c) {
            const kx = svg.clientWidth / c.w, ky = svg.clientHeight / c.h;
            const X = v => Math.round((v + c.at[0]) * kx), Y = v => Math.round((v + c.at[1]) * ky);
            const W = svg.clientWidth, H = svg.clientHeight;
            let s = '';
            const rect = (x, y, w, h, fill, extra = '') => s += `<rect x="${x}" y="${y}" width="${w}" height="${Math.max(h, 1)}" fill="${fill}" ${extra}/>`;
            const line = (x1, y1, x2, y2, stroke, extra = '') => s += `<path d="M${x1} ${y1}L${x2} ${y2}" stroke="${stroke}" ${extra}/>`;
            const text = (x, y, t, fill = '#7e7e7e', anchor = 'start', size = 11) => s += `<text x="${x}" y="${y}" fill="${fill}" font-size="${size}" text-anchor="${anchor}">${t}</text>`;

            // sessions and watermark
            c.bands.forEach(([a, b]) => rect(X(a), 0, X(b) - X(a), Y(c.timeY - 14), '#0d0d0d'));
            text(X(c.mark[2]), Y(c.mark[3]), c.mark[0], '#4c4c4c', 'start', 68);
            text(X(c.mark[2] + 1), Y(c.mark[4]), c.mark[1], '#4c4c4c', 'start', 24);

            // grid
            c.gx.forEach(x => line(X(x) + .5, 3, X(x) + .5, Y(c.timeY - 14), '#3a3a3a', 'stroke-dasharray="1 2"'));
            c.gy.forEach(y => line(0, Y(y) + .5, X(c.right), Y(y) + .5, '#363636', 'stroke-dasharray="1 2"'));
            c.lines.forEach(x => line(X(x) + .5, 0, X(x) + .5, Y(c.timeY - 14), '#232323'));
            (c.bright || []).forEach(x => line(X(x) + .5, 0, X(x) + .5, Y(c.timeY - 14), '#484848'));

            // volumes
            let vols = c.vol.split(' ').map(Number);
            if (!c.vol) {
                vols = Array.from({ length: 300 }, (_, i) => i < 172 ? 1 : i < 179 ? i - 170 : 2 + (300 - i) / 12 + (i * i * 31 + i * 7) % 13 * (i > 240 ? .4 : .7));
                vols[204] = vols[205] = 22;
                vols[277] = 21;
            }
            vols.forEach((v, i) => rect(X(c.x0 + c.step * i) - (c.volW >> 1), Y(c.base - v), c.volW, Y(c.base) - Y(c.base - v), VOL));

            // prices
            (c.candles || '').split(' ').filter(Boolean).forEach((k, i) => {
                const x = X(c.x0 + c.step * i), half = c.body >> 1;
                if (k[0] === 'd') return rect(x - half, Y(+k.slice(1)), c.body, 1, c.up[0]);
                const [stroke, fill] = k[0] === 'r' ? c.down : c.up;
                const [h, t, b, l] = k.slice(1).split(',').map(v => Y(+v));
                rect(x, h, 1, l - h, stroke);
                rect(x - half, t, c.body, b - t, stroke);
                if (b - t > 2) rect(x - half + 1, t + 1, c.body - 2, b - t - 2, fill);
            });
            (c.walk || []).forEach((pts, n) => {
                for (let i = 1; i < pts.length; i++) {
                    const [x1, y1] = pts[i - 1], [x2, y2] = pts[i];
                    for (let x = x1; x < x2; x++) {
                        const y = y1 + (y2 - y1) * (x - x1) / (x2 - x1), j = (x * x * 5 + x) % 7;
                        const up = y2 < y1 ? j > 1 : j > 4;
                        const reach = n ? 5 + j + (x < 222 ? 6 : 0) : 2;
                        rect(X(x), Y(y - reach / 2 + (n ? 0 : j % 3 - 1)), n ? 1 : 2, reach, up ? GREEN : CRIMSON);
                    }
                }
            });
            (c.ticks || '').split(' ').filter(Boolean).forEach(k => {
                const [, x, col, a, b] = k.match(/(\d+)([a-z])(\d+),(\d+)/);
                rect(X(+x), Y(+a), 1, Y(+b) - Y(+a), { r: c.down ? CRIMSON : RED, b: BLUE, g: GREEN }[col]);
            });

            // trades
            c.sell.forEach(([x, y]) => s += `<path d="M${X(x) - 7} ${Y(y)}h15l-7.500 13z" fill="#c01818"/>`);
            c.buy.forEach(([x, y]) => s += `<path d="M${X(x) - 7} ${Y(y) + 13}h15l-7.500 -13z" fill="#0591e0"/>`);

            if (c.level) {
                line(0, Y(c.level) + .5, X(c.right), Y(c.level) + .5, '#b0b0b0');
                s += `<circle cx="0" cy="${Y(c.level) + 1}" r="3" fill="#000" stroke="#ddd"/>`;
            }

            // axes
            c.prices.forEach(([x, y, t, fill]) => text(X(x), Y(y) + 4, t, fill));
            rect(0, Y(c.sep), W, 4, '#4a4a4a', 'fill-opacity=".95"');
            c.times.forEach(([x, t]) => text(X(x), Y(c.timeY) + 4, t, '#787878', 'middle'));

            // crosshair
            if (c.cross) {
                const [x, y] = c.cross, dash = 'stroke-width="2" stroke-dasharray="2 2"';
                line(0, Y(y), X(c.right), Y(y), '#7c7c7c', dash);
                line(0, Y(c.sep) + 2.5, X(c.right), Y(c.sep) + 2.5, '#a0a0a0', 'stroke-dasharray="2 2"');
                line(X(x), 0, X(x), Y(c.timeY - 14), '#7c7c7c', dash);
                rect(X(1071) + .5, Y(217) + .5, 33, 21, '#161616', 'stroke="#555" rx="2"');
                text(X(1088), Y(228) + 4, '30.80', '#f0f0f0', 'middle');
                rect(X(996) + .5, Y(417) + .5, 70, 21, '#161616', 'stroke="#555" rx="2"');
                text(X(1031), Y(431) + 4, '26 Jan 15:10', '#d8d8d8', 'middle');
            }

            // history overview
            const top = Y(c.bar), [r1, r2] = c.range.map(X);
            const area = (pts, stroke, fill) => {
                const p = pts.split(' ').map(q => q.split(',').map(Number)).map(([x, y]) => `${X(x)},${Y(y)}`);
                const first = p[0].split(',')[0], last = p[p.length - 1].split(',')[0];
                s += `<polygon points="${first},${H} ${p.join(' ')} ${last},${H}" fill="${fill}"/><polyline points="${p.join(' ')}" fill="none" stroke="${stroke}" stroke-width="1.500"/>`;
            };
            rect(0, top, W, H - top, '#1c1e1d');
            rect(r1, top, r2 - r1, H - top, '#000');
            area(c.past, '#4d565e', '#242b33');
            area(c.view, '#a9cdea', '#1e3a54');
            rect(0, top, W, 4, '#505050');
            [r1, r2].forEach(x => {
                rect(x - 3, top + 7, 7, 23, '#111', 'rx="3" stroke="#6a6a6a" stroke-width="1.500"');
                rect(x, top + 10, 1, 17, '#6a6a6a');
            });
            svg.innerHTML = s;
        }

        function drawAll() {
            document.querySelectorAll('[data-chart]').forEach(svg => draw(svg, charts[svg.dataset.chart]));
        }
        drawAll();
        window.addEventListener('resize', drawAll);
    </script>
</body>
</html>
